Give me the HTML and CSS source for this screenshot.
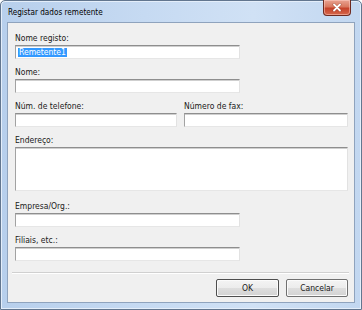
FILE: index.html
```html
<!DOCTYPE html>
<html>
<head>
<meta charset="utf-8">
<link rel="stylesheet" href="styles.css">
</head>
<body>
<div class="window">
  <div class="titlebar">
    <span class="title">Registar dados remetente</span>
    <div class="close">
      <svg width="12" height="9" viewBox="0 0 12 9">
        <path d="M3 1.5 L9 7.5 M9 1.5 L3 7.5" stroke="#7a2a1c" stroke-width="3" stroke-linecap="round" opacity="0.45"/>
        <path d="M3 1.5 L9 7.5 M9 1.5 L3 7.5" stroke="#ffffff" stroke-width="1.8" stroke-linecap="round"/>
      </svg>
    </div>
  </div>
  <div class="client">
    <div class="form">
      <div class="field">
        <div class="label">Nome registo:</div>
        <div class="input w-mid"><span class="sel">Remetente1</span></div>
      </div>
      <div class="field">
        <div class="label">Nome:</div>
        <div class="input w-mid"></div>
      </div>
      <div class="row">
        <div class="field">
          <div class="label">Núm. de telefone:</div>
          <div class="input w-tel"></div>
        </div>
        <div class="field">
          <div class="label">Número de fax:</div>
          <div class="input w-fax"></div>
        </div>
      </div>
      <div class="field field-tall">
        <div class="label">Endereço:</div>
        <div class="input w-full tall"></div>
      </div>
      <div class="field">
        <div class="label">Empresa/Org.:</div>
        <div class="input w-mid"></div>
      </div>
      <div class="field">
        <div class="label">Filiais, etc.:</div>
        <div class="input w-mid"></div>
      </div>
    </div>
    <div class="sep"></div>
    <div class="buttons">
      <div class="btn btn-default">OK</div>
      <div class="btn btn-cancel">Cancelar</div>
    </div>
  </div>
</div>
</body>
</html>
```
FILE: styles.css
```css
html, body {
  margin: 0;
  padding: 0;
  background: #ffffff;
}
body {
  font-family: "DejaVu Sans Condensed", "DejaVu Sans", sans-serif;
  font-size: 8.5px;
  color: #1a1a1a;
}
.window {
  width: 362px;
  height: 310px;
  box-sizing: border-box;
  border: 1px solid #62768f;
  border-radius: 5px 5px 0 0;
  background: linear-gradient(90deg, #b7cfec 0%, #c6daf2 40%, #d0e1f5 70%, #c2d7f0 100%);
  padding: 0 6px 6px 6px;
  display: flex;
  flex-direction: column;
  box-shadow: inset 0 0 0 1px #e4eefa;
}
.titlebar {
  height: 21px;
  display: flex;
  align-items: flex-start;
  justify-content: space-between;
}
.title {
  font-size: 8.1px;
  line-height: 12px;
  margin-top: 5px;
  margin-left: 1px;
  color: #000;
}
.close {
  width: 28px;
  height: 16px;
  box-sizing: border-box;
  margin-right: 4px;
  margin-top: -1px;
  border: 1px solid #6e2a20;
  border-top: none;
  border-radius: 0 0 4px 4px;
  background: linear-gradient(#eaa392 0%, #d9785f 45%, #c6422a 55%, #d5674b 100%);
  box-shadow: inset 0 0 0 1px rgba(255, 210, 200, 0.5);
  display: flex;
  align-items: center;
  justify-content: center;
}
.close svg {
  display: block;
}
.client {
  flex: 1;
  border: 1px solid #8fa3bd;
  background: #f0f0f0;
  display: flex;
  flex-direction: column;
}
.form {
  padding: 9px 0 0 7px;
  display: flex;
  flex-direction: column;
}
.field {
  display: flex;
  flex-direction: column;
  margin-bottom: 7px;
}
.field-tall {
  margin-bottom: 9px;
}
.row {
  display: flex;
  gap: 7px;
}
.label {
  line-height: 12px;
  height: 12px;
  margin-bottom: 1px;
  white-space: nowrap;
}
.input {
  height: 14px;
  box-sizing: border-box;
  background: #ffffff;
  border-top: 1px solid #8e8e8e;
  border-left: 1px solid #a2a2a2;
  border-right: 1px solid #e2e2e2;
  border-bottom: 1px solid #e6e6e6;
  box-shadow: inset 0 1px 0 #cfcfcf;
  padding: 2px 0 0 2px;
  line-height: 9px;
}
.w-mid { width: 225px; }
.w-tel { width: 162px; }
.w-fax { width: 164px; }
.w-full { width: 333px; }
.tall { height: 44px; }
.sel {
  display: inline-block;
  background: #3399ff;
  color: #ffffff;
  line-height: 9px;
  padding: 0 1px;
}
.sep {
  height: 1px;
  margin: 4px 5px 0 4px;
  background: #d0d0d0;
  border-bottom: 1px solid #ffffff;
}
.buttons {
  display: flex;
  justify-content: flex-end;
  gap: 7px;
  padding-right: 6px;
  margin-top: 5px;
}
.btn {
  height: 18px;
  box-sizing: border-box;
  border: 1px solid #707070;
  border-radius: 2px;
  background: linear-gradient(#f4f4f4 0%, #ececec 50%, #dedede 51%, #d2d2d2 100%);
  box-shadow: inset 0 0 0 1px #fbfbfb;
  display: flex;
  align-items: center;
  justify-content: center;
  line-height: 12px;
}
.btn-default {
  width: 63px;
  border-color: #4e4e4e;
}
.btn-cancel {
  width: 62px;
}
```
